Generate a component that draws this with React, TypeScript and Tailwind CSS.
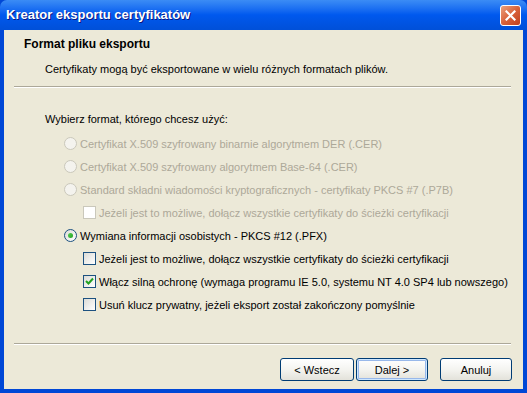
import React from "react";

const font = { fontFamily: '"Liberation Sans", Arial, sans-serif' };

function Radio({ checked, disabled }: { checked?: boolean; disabled?: boolean }) {
  return (
    <span
      className={
        "flex h-[13px] w-[13px] shrink-0 items-center justify-center rounded-full border " +
        (disabled
          ? "border-[#cac8bb] bg-[#f4f3ee]"
          : "border-[#1c5180] bg-gradient-to-br from-[#dcdcd7] to-white")
      }
    >
      {checked && (
        <span className="h-[5px] w-[5px] rounded-full bg-gradient-to-br from-[#55d051] to-[#21a121]" />
      )}
    </span>
  );
}

function Check({ checked, disabled }: { checked?: boolean; disabled?: boolean }) {
  return (
    <span
      className={
        "flex h-[13px] w-[13px] shrink-0 items-center justify-center border " +
        (disabled
          ? "border-[#cac8bb] bg-white"
          : "border-[#1c5180] bg-gradient-to-br from-[#dcdcd7] to-white")
      }
    >
      {checked && (
        <svg width="9" height="9" viewBox="0 0 9 9">
          <path d="M1 4 L3.5 6.5 L8 1.5" fill="none" stroke="#21a121" strokeWidth="2" />
        </svg>
      )}
    </span>
  );
}

function Row({
  kind,
  label,
  checked,
  disabled,
}: {
  kind: "radio" | "check";
  label: string;
  checked?: boolean;
  disabled?: boolean;
}) {
  return (
    <div className={"flex h-[23px] items-center gap-[3px] " + (kind === "radio" ? "pl-[60px]" : "pl-[79px]")}>
      {kind === "radio" ? <Radio checked={checked} disabled={disabled} /> : <Check checked={checked} disabled={disabled} />}
      <span className={disabled ? "text-[#aca899]" : "text-black"}>{label}</span>
    </div>
  );
}

function Separator() {
  return (
    <div className="ml-[10px] mr-[12px]">
      <div className="h-px bg-[#aca899]" />
      <div className="h-px bg-white" />
    </div>
  );
}

function XpButton({ label, focused, width }: { label: string; focused?: boolean; width: string }) {
  return (
    <button
      className={
        width +
        " h-[23px] rounded-[3px] border border-[#003c74] bg-gradient-to-b from-white via-[#f4f4f0] to-[#e3e2da] text-[11px] text-black " +
        (focused ? "shadow-[inset_0_0_0_1px_#cee7ff,inset_0_0_0_2px_#98b8ea]" : "")
      }
    >
      {label}
    </button>
  );
}

export default function App() {
  return (
    <div className="flex h-[393px] w-[527px] flex-col bg-[#0047d6]" style={font}>
      <div className="flex h-[30px] items-center justify-between rounded-t-[7px] bg-gradient-to-b from-[#3b8cf5] via-[#0058ee] to-[#0050d8] pl-[6px] pr-[6px]">
        <span className="text-[13px] font-bold text-white [text-shadow:1px_1px_0_#0a1883]">
          Kreator eksportu certyfikatów
        </span>
        <span className="flex h-[21px] w-[21px] items-center justify-center rounded-[3px] border border-white bg-gradient-to-br from-[#e9a07c] via-[#d9623a] to-[#c0401c]">
          <svg width="11" height="11" viewBox="0 0 11 11">
            <path d="M1.5 1.5 L9.5 9.5 M9.5 1.5 L1.5 9.5" stroke="white" strokeWidth="2.2" strokeLinecap="square" />
          </svg>
        </span>
      </div>
      <div className="mx-[4px] mb-[4px] flex flex-1 flex-col bg-[#ece9d8] text-[11px] leading-[14px]">
        <div className="mt-[7px] h-[14px] pl-[20px] text-[12px] font-bold text-black">Format pliku eksportu</div>
        <div className="mt-[11px] h-[14px] pl-[41px] text-black">
          Certyfikaty mogą być eksportowane w wielu różnych formatach plików.
        </div>
        <div className="mt-[10px]">
          <Separator />
        </div>
        <div className="mt-[24px] h-[14px] pl-[41px] text-black">Wybierz format, którego chcesz użyć:</div>
        <div className="mt-[6px] flex flex-col">
          <Row kind="radio" disabled label="Certyfikat X.509 szyfrowany binarnie algorytmem DER (.CER)" />
          <Row kind="radio" disabled label="Certyfikat X.509 szyfrowany algorytmem Base-64 (.CER)" />
          <Row
            kind="radio"
            disabled
            label="Standard składni wiadomości kryptograficznych - certyfikaty PKCS #7 (.P7B)"
          />
          <Row kind="check" disabled label="Jeżeli jest to możliwe, dołącz wszystkie certyfikaty do ścieżki certyfikacji" />
          <Row kind="radio" checked label="Wymiana informacji osobistych - PKCS #12 (.PFX)" />
          <Row kind="check" label="Jeżeli jest to możliwe, dołącz wszystkie certyfikaty do ścieżki certyfikacji" />
          <Row
            kind="check"
            checked
            label="Włącz silną ochronę (wymaga programu IE 5.0, systemu NT 4.0 SP4 lub nowszego)"
          />
          <Row kind="check" label="Usuń klucz prywatny, jeżeli eksport został zakończony pomyślnie" />
        </div>
        <div className="mt-[27px]">
          <Separator />
        </div>
        <div className="mt-[13px] flex justify-end pr-[11px]">
          <XpButton label="< Wstecz" width="w-[74px]" />
          <div className="w-[2px]" />
          <XpButton label="Dalej >" width="w-[72px]" focused />
          <div className="w-[12px]" />
          <XpButton label="Anuluj" width="w-[72px]" />
        </div>
      </div>
    </div>
  );
}
